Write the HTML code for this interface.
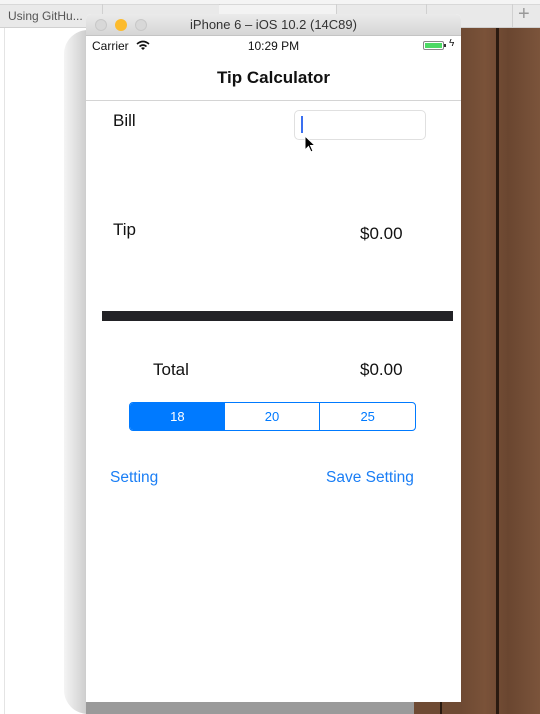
<!DOCTYPE html>
<html><head><style>
*{margin:0;padding:0;box-sizing:border-box}
body{width:540px;height:714px;overflow:hidden;background:#fff;position:relative;font-family:"Liberation Sans",sans-serif}
.abs{position:absolute}
</style></head><body>
<div class="abs" style="left:0;top:0;width:540px;height:5px;background:#f4f4f4"></div>
<div class="abs" style="left:0;top:4px;width:540px;height:24px;background:#e9e9e9;border-top:1px solid #d8d8d8;border-bottom:1px solid #d0d0d0"></div>
<div class="abs" style="left:8px;top:9px;font-size:12px;color:#555">Using GitHu...</div>
<div class="abs" style="left:102px;top:4px;width:1px;height:24px;background:#d0d0d0"></div>
<div class="abs" style="left:219px;top:4px;width:1px;height:24px;background:#d0d0d0"></div>
<div class="abs" style="left:219px;top:5px;width:117px;height:23px;background:#f3f3f3"></div>
<div class="abs" style="left:336px;top:4px;width:1px;height:24px;background:#d0d0d0"></div>
<div class="abs" style="left:426px;top:4px;width:1px;height:24px;background:#d0d0d0"></div>
<div class="abs" style="left:512px;top:4px;width:1px;height:24px;background:#d0d0d0"></div>
<div class="abs" style="left:518px;top:3px;font-size:20px;color:#999">+</div>
<div class="abs" style="left:4px;top:28px;width:1px;height:686px;background:#e4e4e4"></div>
<div class="abs" style="left:461px;top:28px;width:79px;height:686px;background:linear-gradient(90deg,#6e4a33,#7a5239 30%,#6a4630 60%,#7b543b)"></div>
<div class="abs" style="left:414px;top:700px;width:47px;height:14px;background:#6e4a33"></div>
<div class="abs" style="left:496px;top:28px;width:3px;height:686px;background:#2a1a10"></div>
<div class="abs" style="left:440px;top:700px;width:2px;height:14px;background:#2a1a10"></div>
<div class="abs" style="left:64px;top:30px;width:24px;height:684px;border-radius:24px 0 0 24px;background:linear-gradient(90deg,#f4f4f4,#e4e4e4 40%,#cfcfcf 90%,#a0a0a0)"></div>
<div class="abs" style="left:86px;top:702px;width:328px;height:12px;background:#9a9a9a"></div>
<div class="abs" style="left:86px;top:14px;width:375px;height:688px;background:#fff;border-radius:5px 5px 0 0;overflow:hidden">
  <div class="abs" style="left:0;top:0;width:375px;height:22px;background:linear-gradient(#ebebeb,#d6d6d6);border-bottom:1px solid #c4c4c4"></div>
  <div class="abs" style="left:9px;top:5px;width:12px;height:12px;border-radius:6px;background:#d8d8d8;border:1px solid #c8c8c8"></div>
  <div class="abs" style="left:29px;top:5px;width:12px;height:12px;border-radius:6px;background:#fcbb2d"></div>
  <div class="abs" style="left:49px;top:5px;width:12px;height:12px;border-radius:6px;background:#d8d8d8;border:1px solid #c8c8c8"></div>
  <div class="abs" style="left:0;top:3px;width:375px;text-align:center;font-size:13px;color:#333">iPhone 6 – iOS 10.2 (14C89)</div>
  <div class="abs" style="left:6px;top:25px;font-size:12px;color:#111">Carrier</div>
  <svg class="abs" style="left:50px;top:26px" width="14" height="11" viewBox="0 0 14 11"><path d="M1 4Q7-1 13 4" stroke="#111" stroke-width="1.6" fill="none"/><path d="M3.5 6.5Q7 3.5 10.5 6.5" stroke="#111" stroke-width="1.6" fill="none"/><path d="M7 10L5 8Q7 6.5 9 8Z" fill="#111"/></svg>
  <div class="abs" style="left:0;top:25px;width:375px;text-align:center;font-size:12px;color:#111">10:29 PM</div>
  <div class="abs" style="left:337px;top:27px;width:21px;height:9px;border:1px solid #888;border-radius:2px;padding:1px"><div style="width:100%;height:100%;background:#4cd964"></div></div>
  <div class="abs" style="left:358px;top:30px;width:2px;height:3px;background:#333"></div>
  <div class="abs" style="left:363px;top:24px;font-size:10px;color:#111">ϟ</div>
  <div class="abs" style="left:0;top:54px;width:375px;text-align:center;font-size:17px;font-weight:bold;color:#111">Tip Calculator</div>
  <div class="abs" style="left:0;top:86px;width:375px;height:1px;background:#d4d4d4"></div>
  <div class="abs" style="left:27px;top:97px;font-size:17px;color:#111">Bill</div>
  <div class="abs" style="left:208px;top:96px;width:132px;height:30px;border:1px solid #e0e0e0;border-radius:5px"></div>
  <div class="abs" style="left:215px;top:102px;width:2px;height:17px;background:#3a6ff0"></div>
  <svg class="abs" style="left:218px;top:121px" width="12" height="19" viewBox="0 0 12 19"><path d="M1 1L1 15L4.5 11.5L7 17L9 16L6.5 10.5L11 10.5Z" fill="#000" stroke="#fff" stroke-width="1"/></svg>
  <div class="abs" style="left:27px;top:206px;font-size:17px;color:#111">Tip</div>
  <div class="abs" style="left:274px;top:210px;font-size:17px;color:#111">$0.00</div>
  <div class="abs" style="left:16px;top:297px;width:351px;height:10px;background:#222226"></div>
  <div class="abs" style="left:67px;top:346px;font-size:17px;color:#111">Total</div>
  <div class="abs" style="left:274px;top:346px;font-size:17px;color:#111">$0.00</div>
  <div class="abs" style="left:43px;top:388px;width:287px;height:29px;border:1px solid #007aff;border-radius:4px;display:flex;overflow:hidden;font-size:13px">
    <div style="flex:1;background:#007aff;color:#fff;text-align:center;line-height:27px">18</div>
    <div style="flex:1;color:#007aff;text-align:center;line-height:27px;border-right:1px solid #007aff">20</div>
    <div style="flex:1;color:#007aff;text-align:center;line-height:27px">25</div>
  </div>
  <div class="abs" style="left:24px;top:455px;font-size:15.5px;color:#1a7ef5">Setting</div>
  <div class="abs" style="left:240px;top:455px;font-size:15.5px;color:#1a7ef5">Save Setting</div>
</div>
</body></html>
